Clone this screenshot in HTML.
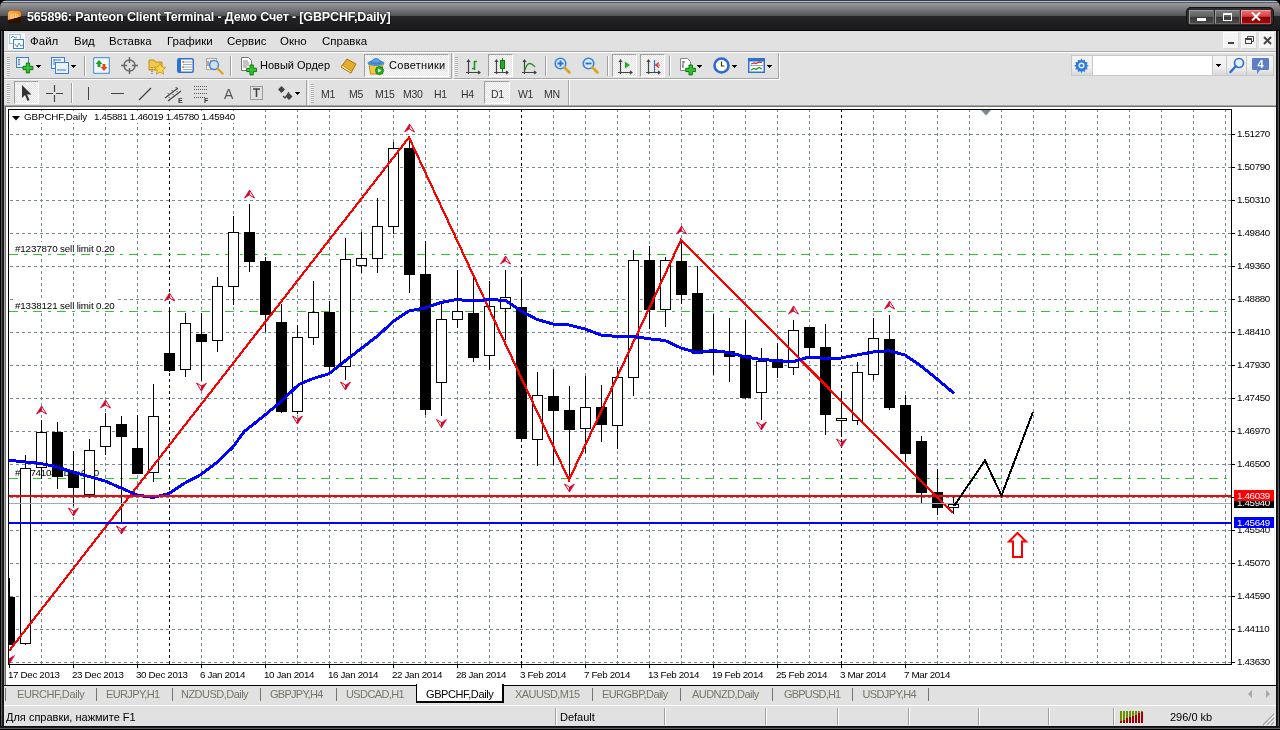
<!DOCTYPE html>
<html lang="ru"><head><meta charset="utf-8"><title>565896: Panteon Client Terminal</title>
<style>
*{box-sizing:border-box;margin:0;padding:0}
html,body{width:1280px;height:730px;overflow:hidden;background:#000}
body{position:relative;font-family:"Liberation Sans","DejaVu Sans",sans-serif;font-size:11px;color:#000}
.abs{position:absolute}
#title{position:absolute;left:0;top:0;width:1280px;height:31px;border-radius:7px 7px 0 0;background:linear-gradient(#3a3a3a 0,#3a3a3a 1px,#a8c0e8 1px,#a8c0e8 2px,#5a5a5a 2px,#5a5a5a 3px,#9a9a9c 3px,#545456 16px,#252527 16px,#1a1a1c 30px,#000 30px)}
#title .t{position:absolute;left:27px;top:10px;font-weight:bold;font-size:12.5px;color:#fff;white-space:nowrap;letter-spacing:-0.14px;text-shadow:0 0 2px #000}
#client{position:absolute;left:4px;top:31px;width:1272px;height:695px;background:#e1e1e1}
#menu{position:absolute;left:0;top:0;width:1272px;height:21px;background:#ececec}
#menu span{position:absolute;top:4px;font-size:11.5px;white-space:nowrap}
.tb{position:absolute;height:26px;border-top:1px solid #fff;border-bottom:1px solid #a8a8a8}
.sep{position:absolute;width:2px;height:20px;border-left:1px solid #a0a0a0;border-right:1px solid #fff}
.grip{position:absolute;width:3px;height:19px;background:repeating-linear-gradient(#b0b0b0 0,#b0b0b0 1px,#f4f4f4 1px,#f4f4f4 2px)}
.pressed{position:absolute;border:1px solid #a0a0a0;border-right-color:#fff;border-bottom-color:#fff;background:repeating-conic-gradient(#fff 0 25%,#e1e1e1 0 50%) 0 0/2px 2px}
.tf{position:absolute;top:88px;font-size:10.5px;letter-spacing:-0.3px;color:#333;white-space:nowrap}
.pl{position:absolute;left:1237px;font-size:9.8px;letter-spacing:-0.35px;line-height:12px;height:12px;white-space:nowrap}
.tk{position:absolute;left:1231px;width:4px;height:1px;background:#000}
.dl{position:absolute;top:669px;font-size:9.8px;letter-spacing:-0.35px;line-height:12px;white-space:nowrap}
.dt{position:absolute;top:664px;width:1px;height:4px;background:#000}
.tab{position:absolute;top:688px;font-size:11px;letter-spacing:-0.4px;color:#76766a;white-space:nowrap}
.tsep{position:absolute;top:688px;width:1px;height:13px;background:#76766a}
.mi{position:absolute;top:35px;font-size:11.5px;margin-left:-1px;white-space:nowrap}
.mdib{position:absolute;top:32px;width:16px;height:17px;background:#f4f4f4;border:1px solid #fafafa;border-right-color:#d8d8d8;border-bottom-color:#d8d8d8}
.mdib i{position:absolute;display:block}
.wb{height:14px;border:1px solid;border-color:#9a9a9a #666 #666 #9a9a9a;background:linear-gradient(#787878 0,#626262 45%,#383838 50%,#484848 100%)}
.ct{position:absolute;font-size:9.8px;letter-spacing:-0.35px;background:#fff;white-space:nowrap;line-height:12px}
#root{position:absolute;left:0;top:0;width:1280px;height:730px;will-change:transform}
</style></head><body><div id="root">
<div id="title"><svg class="abs" style="left:7px;top:9px" width="15" height="16" viewBox="0 0 17 17"><defs><linearGradient id="og" x1="0" y1="0" x2="1" y2="0"><stop offset="0" stop-color="#ffb347"/><stop offset="1" stop-color="#ff7f1a"/></linearGradient></defs><path d="M1 5a4 4 0 014-4h7a4 4 0 014 4v8a3 3 0 01-3 3h-9a3 3 0 01-3-3z" fill="#2a1200"/><path d="M1 5a4 4 0 014-4h7a4 4 0 014 4v3l-15 4z" fill="url(#og)"/><path d="M4 5.500a5 2.500 0 019 0v3l-9 2.400z" fill="#ffe0b0" opacity=".75"/><path d="M6 4v5M8.500 3.500v5M11 4v4" stroke="#ff9c3a" stroke-width="1"/></svg><div class="t">565896: Panteon Client Terminal - Демо Счет - [GBPCHF,Daily]</div></div>
<div id="client"></div>
<div class="abs" style="left:0;top:31px;width:4px;height:699px;background:linear-gradient(90deg,#000 0,#000 1px,#5a5c60 1px,#5a5c60 2px,#1c1d20 2px,#1c1d20 3px,#15161a 3px)"></div>
<div class="abs" style="left:1276px;top:31px;width:4px;height:699px;background:linear-gradient(90deg,#0c0d10 0,#0c0d10 1px,#1c1d20 1px,#1c1d20 2px,#5a5c60 2px,#5a5c60 3px,#000 3px)"></div>
<div class="abs" style="left:0;top:726px;width:1280px;height:4px;background:linear-gradient(#0c0d10 0,#0c0d10 1px,#1c1d20 1px,#1c1d20 2px,#5a5c60 2px,#5a5c60 3px,#000 3px)"></div>

<div class="abs" style="left:4px;top:31px;width:1272px;height:20px;background:#e1e1e1"></div><div class="abs" style="left:4px;top:51px;width:1272px;height:1px;background:#a8a8a8"></div>
<svg class="abs" style="left:8px;top:33px" width="18" height="17" viewBox="0 0 18 17"><rect x="0" y="0" width="17" height="17" fill="#f6f8fc"/><rect x="1.5" y="1.5" width="11" height="9" fill="#fff" stroke="#3b7fd0" stroke-dasharray="1 1"/><rect x="5.5" y="6.5" width="10" height="9" fill="#fff" stroke="#3b7fd0"/><path d="M7 11l2 3 2-4 2 3 2-1" fill="none" stroke="#4a8fe0"/><path d="M3 5l2-2 2 2 2-1" fill="none" stroke="#4a8fe0"/></svg>
<div class="mi" style="left:31px">Файл</div>
<div class="mi" style="left:75px">Вид</div>
<div class="mi" style="left:110px">Вставка</div>
<div class="mi" style="left:168px">Графики</div>
<div class="mi" style="left:228px">Сервис</div>
<div class="mi" style="left:281px">Окно</div>
<div class="mi" style="left:323px">Справка</div>
<div class="mdib" style="left:1223px"><i style="left:4px;top:9px;width:6px;height:2px;background:#444"></i></div>
<div class="mdib" style="left:1241px"><svg class="abs" style="left:2px;top:2px" width="11" height="11" viewBox="0 0 11 11"><path d="M3.5 3.5V1.5H9.5V6.5H7.5" fill="none" stroke="#444"/><path d="M1 3H8V9H1Z M2 5H7V8H2Z" fill="#444" fill-rule="evenodd"/></svg></div>
<div class="mdib" style="left:1259px"><svg class="abs" style="left:3px;top:3px" width="9" height="9" viewBox="0 0 9 9"><path d="M1 1L8 8M8 1L1 8" stroke="#444" stroke-width="2"/></svg></div><div class="abs" style="left:1187px;top:8px;width:86px;height:17px;border-radius:4px;background:#2e2e2e;box-shadow:0 0 0 1px #111"></div>
<div class="abs wb" style="left:1189px;top:10px;width:25px"></div><div class="abs wb" style="left:1215px;top:10px;width:25px"></div><div class="abs wb" style="left:1241px;top:10px;width:30px;background:linear-gradient(#e87070 0,#d64040 45%,#8a0000 50%,#a00808 100%);border-color:#f0a0a0 #c05050 #c05050 #f0a0a0"></div>
<div class="abs" style="left:1197px;top:18px;width:9px;height:3px;background:#fff"></div>
<div class="abs" style="left:1223px;top:13px;width:9px;height:8px;border:1px solid #fff;border-top-width:2px"></div>
<svg class="abs" style="left:1251px;top:12px" width="10" height="9" viewBox="0 0 10 9"><path d="M1 0.500L9 8.500M9 0.500L1 8.500" stroke="#fff" stroke-width="2"/></svg>
<div class="abs" style="left:4px;top:52px;width:1272px;height:1px;background:#fff"></div>
<div class="abs" style="left:4px;top:53px;width:448px;height:26px;border-bottom:1px solid #a6a6a6;border-right:1px solid #a6a6a6"></div>
<div class="abs" style="left:453px;top:53px;width:326px;height:26px;border-bottom:1px solid #a6a6a6;border-right:1px solid #a6a6a6;border-left:1px solid #fff"></div>
<div class="abs" style="left:4px;top:79px;width:775px;height:1px;background:#fff"></div>
<div class="abs" style="left:779px;top:53px;width:1px;height:27px;background:#fff"></div>
<div class="abs" style="left:4px;top:80px;width:303px;height:26px;border-right:1px solid #a6a6a6"></div>
<div class="abs" style="left:308px;top:80px;width:261px;height:26px;border-right:1px solid #a6a6a6;border-left:1px solid #fff"></div>
<div class="abs" style="left:569px;top:80px;width:1px;height:26px;background:#fff"></div>
<div class="abs" style="left:4px;top:105px;width:1272px;height:1px;background:#a6a6a6"></div>
<div class="abs" style="left:4px;top:106px;width:1272px;height:2px;background:#fff"></div>
<div class="grip" style="left:7px;top:57px"></div>
<div class="grip" style="left:455px;top:57px"></div>
<div class="grip" style="left:7px;top:84px"></div>
<div class="grip" style="left:311px;top:84px"></div>
<div class="sep" style="left:84px;top:56px"></div>
<div class="sep" style="left:230px;top:56px"></div>
<div class="sep" style="left:545px;top:56px"></div>
<div class="sep" style="left:607px;top:56px"></div>
<div class="sep" style="left:669px;top:56px"></div>
<div class="sep" style="left:71px;top:83px"></div>
<div class="pressed" style="left:364px;top:54px;width:85px;height:23px"></div>
<div class="pressed" style="left:488px;top:54px;width:25px;height:23px"></div>
<div class="pressed" style="left:612px;top:54px;width:25px;height:23px"></div>
<div class="pressed" style="left:640px;top:54px;width:25px;height:23px"></div>
<div class="pressed" style="left:14px;top:81px;width:25px;height:23px"></div>
<div class="pressed" style="left:484px;top:81px;width:26px;height:23px"></div>
<svg class="abs" style="left:16px;top:57px" width="18" height="18" viewBox="0 0 18 18"><rect x="0.5" y="0.5" width="12" height="10" fill="#eaf2fc" stroke="#3f7fcf"/><path d="M3 2v6M2 3l1-1 1 1M2 7l1 1 1-1" stroke="#3f7fcf" fill="none"/><path d="M10.3 6h3.300v3.300h3.300v3.300h-3.300v3.300h-3.300v-3.300h-3.300v-3.300h3.300z" fill="#35c435" stroke="#0b7a0b" stroke-width="1"/></svg>
<svg class="abs" style="left:36px;top:65px" width="6" height="3" viewBox="0 0 6 3" shape-rendering="crispEdges"><path d="M0 0H5V1H4V2H3V3H2V2H1V1H0Z" fill="#000"/></svg>
<svg class="abs" style="left:51px;top:57px" width="18" height="18" viewBox="0 0 18 18"><rect x="0.5" y="0.5" width="13" height="11" fill="#eaf2fc" stroke="#3f7fcf"/><rect x="4.5" y="5.5" width="13" height="11" fill="#eaf2fc" stroke="#3f7fcf"/><path d="M3 3h7M6 13h9M3 2v6" stroke="#3f7fcf" fill="none"/></svg>
<svg class="abs" style="left:71px;top:65px" width="6" height="3" viewBox="0 0 6 3" shape-rendering="crispEdges"><path d="M0 0H5V1H4V2H3V3H2V2H1V1H0Z" fill="#000"/></svg>
<svg class="abs" style="left:93px;top:57px" width="17" height="17" viewBox="0 0 17 17"><rect x="0.5" y="0.5" width="16" height="16" rx="1.5" fill="#f4f8fe" stroke="#5b9be0" stroke-width="1.4"/><path d="M6 3l3.5 4h-2v3h-3v-3h-2z" fill="#22a022"/><path d="M11 14l-3.500-4h2v-3h3v3h2z" fill="#e04a20"/></svg>
<svg class="abs" style="left:121px;top:57px" width="17" height="17" viewBox="0 0 17 17"><circle cx="8.500" cy="8.500" r="5.500" fill="none" stroke="#666" stroke-width="1.400"/><path d="M8.500 0v6M8.500 11v6M0 8.500h6M11 8.500h6" stroke="#666" stroke-width="1.400"/></svg>
<svg class="abs" style="left:148px;top:57px" width="19" height="18" viewBox="0 0 19 18"><path d="M1 3h5l1.500 2h6.500v8h-13z" fill="#f2c94c" stroke="#b8901c"/><path d="M4 10v7" stroke="#555" stroke-dasharray="1 1"/><path d="M12 6l1.800 3.800 4 .500-3 2.800.8 4-3.600-2-3.600 2 .8-4-3-2.800 4-.500z" fill="#ffd84a" stroke="#c09018" stroke-width=".8"/></svg>
<svg class="abs" style="left:177px;top:58px" width="17" height="15" viewBox="0 0 17 15"><rect x="0.750" y="0.750" width="15.500" height="13.500" rx="1.500" fill="#fff" stroke="#2f6fd0" stroke-width="1.500"/><rect x="1" y="1" width="3" height="13" fill="#2f6fd0"/><path d="M6 4h9M6 6.500h9M6 9h9M6 11.500h9" stroke="#9ab" stroke-width="1"/><path d="M5 4h2M5 9h2" stroke="#d33" stroke-width="1"/></svg>
<svg class="abs" style="left:205px;top:57px" width="19" height="19" viewBox="0 0 19 19"><rect x="1.500" y="1.500" width="10" height="11" fill="#f4efe4" stroke="#b0a890"/><path d="M3 4v5M6 3v7M9 4v4" stroke="#667"/><circle cx="9" cy="8" r="4.500" fill="#cfe4fa" fill-opacity=".85" stroke="#4a8ad8" stroke-width="1.500"/><path d="M12.500 11.500l5 5" stroke="#d9a520" stroke-width="2.400" stroke-linecap="round"/></svg>
<svg class="abs" style="left:240px;top:57px" width="17" height="19" viewBox="0 0 17 19"><path d="M1.500 0.500h7l3 3v10h-10z" fill="#fff" stroke="#777"/><path d="M3 4h5M3 6h6M3 8h6M3 10h4" stroke="#888" stroke-width="1"/><path d="M10 8h3.300v3.300h3.300v3.300h-3.300v3.300h-3.300v-3.300h-3.300v-3.300h3.300z" fill="#35c435" stroke="#0b7a0b" stroke-width="1"/></svg>
<div class="abs" style="left:260px;top:59px;font-size:11px;white-space:nowrap">Новый Ордер</div>
<svg class="abs" style="left:340px;top:58px" width="17" height="16" viewBox="0 0 17 16"><path d="M1 9l6-8 9 5-5 9z" fill="#e6ac2c" stroke="#a87408"/><path d="M1 9l10 6 .5-2-9-5.500z" fill="#fbe9a8" stroke="#a87408" stroke-width=".7"/></svg>
<svg class="abs" style="left:367px;top:57px" width="18" height="19" viewBox="0 0 18 19"><path d="M2 7h14l-1.500 10h-11z" fill="#f5c842" stroke="#c09018"/><ellipse cx="9" cy="6" rx="8.500" ry="3" fill="#4a90d9"/><path d="M4.500 6a4.500 4.500 0 019 0z" fill="#5aa0e6" stroke="#2f6fc0" stroke-width=".8"/><circle cx="12.500" cy="13.500" r="4" fill="#22b022" stroke="#0b7a0b" stroke-width=".8"/><path d="M11.200 11.500v4l3.200-2z" fill="#fff"/></svg>
<div class="abs" style="left:389px;top:59px;font-size:11px;letter-spacing:0.3px;white-space:nowrap">Советники</div>
<svg class="abs" style="left:466px;top:57px" width="15" height="18" viewBox="0 0 15 18"><path d="M2.500 3v14M0 15.500h14M1 5l1.500-2 1.500 2M12 14l2 1.500-2 1.500" fill="none" stroke="#444" stroke-width="1.200"/><path d="M8.500 4v9M8.500 4.500h2.500M6 11.500h2.500" stroke="#1a9a1a" stroke-width="1.600" fill="none"/></svg>
<svg class="abs" style="left:494px;top:57px" width="15" height="18" viewBox="0 0 15 18"><path d="M2.500 3v14M0 15.500h14M1 5l1.500-2 1.500 2M12 14l2 1.500-2 1.500" fill="none" stroke="#444" stroke-width="1.200"/><path d="M8.500 1v14" stroke="#0b7a0b"/><rect x="6.500" y="3.500" width="4" height="8" fill="#22b022" stroke="#0b7a0b"/></svg>
<svg class="abs" style="left:522px;top:57px" width="15" height="18" viewBox="0 0 15 18"><path d="M2.500 3v14M0 15.500h14M1 5l1.500-2 1.500 2M12 14l2 1.500-2 1.500" fill="none" stroke="#444" stroke-width="1.200"/><path d="M3 13c2-7 5-9 10-3" stroke="#1a9a1a" stroke-width="1.400" fill="none"/></svg>
<svg class="abs" style="left:554px;top:57px" width="18" height="18" viewBox="0 0 18 18"><circle cx="6.500" cy="6.500" r="5.300" fill="#d6e8fb" stroke="#3b82d8" stroke-width="1.600"/><path d="M10.500 10.500l5 5" stroke="#d9a520" stroke-width="2.600" stroke-linecap="round"/><path d="M3.500 6.500h6M6.500 3.500v6" stroke="#2a6fd0" stroke-width="1.800"/></svg>
<svg class="abs" style="left:582px;top:57px" width="18" height="18" viewBox="0 0 18 18"><circle cx="6.500" cy="6.500" r="5.300" fill="#d6e8fb" stroke="#3b82d8" stroke-width="1.600"/><path d="M10.500 10.500l5 5" stroke="#d9a520" stroke-width="2.600" stroke-linecap="round"/><path d="M3.500 6.500h6" stroke="#2a6fd0" stroke-width="1.800"/></svg>
<svg class="abs" style="left:618px;top:57px" width="15" height="18" viewBox="0 0 15 18"><path d="M2.500 3v14M0 15.500h14M1 5l1.500-2 1.500 2M12 14l2 1.500-2 1.500" fill="none" stroke="#444" stroke-width="1.200"/><path d="M7 4.500l5 3.500-5 3.500z" fill="#22b022"/></svg>
<svg class="abs" style="left:646px;top:57px" width="15" height="18" viewBox="0 0 15 18"><path d="M2.500 3v14M0 15.500h14M1 5l1.500-2 1.500 2M12 14l2 1.500-2 1.500" fill="none" stroke="#444" stroke-width="1.200"/><path d="M8.500 3v12" stroke="#2a6fd0" stroke-width="1.200"/><path d="M13 5.500l-3.500 2.500 3.500 2.500M9.500 8h4.500" stroke="#d33" stroke-width="1.200" fill="none"/></svg>
<svg class="abs" style="left:679px;top:57px" width="17" height="19" viewBox="0 0 17 19"><path d="M1.500 1.500h7l3 3v9h-10z" fill="#fff" stroke="#888"/><path d="M4 4v7M4 5h2M4 9h-1" stroke="#555"/><path d="M10 8h3.300v3.300h3.300v3.300h-3.300v3.300h-3.300v-3.300h-3.300v-3.300h3.300z" fill="#35c435" stroke="#0b7a0b" stroke-width="1"/></svg>
<svg class="abs" style="left:697px;top:65px" width="6" height="3" viewBox="0 0 6 3" shape-rendering="crispEdges"><path d="M0 0H5V1H4V2H3V3H2V2H1V1H0Z" fill="#000"/></svg>
<svg class="abs" style="left:713px;top:57px" width="17" height="17" viewBox="0 0 17 17"><circle cx="8.500" cy="8.500" r="7" fill="#fff" stroke="#2a6ad4" stroke-width="2.600"/><path d="M8.500 4.500v4.500h3" stroke="#333" stroke-width="1.200" fill="none"/></svg>
<svg class="abs" style="left:732px;top:65px" width="6" height="3" viewBox="0 0 6 3" shape-rendering="crispEdges"><path d="M0 0H5V1H4V2H3V3H2V2H1V1H0Z" fill="#000"/></svg>
<svg class="abs" style="left:748px;top:58px" width="17" height="15" viewBox="0 0 17 15"><rect x=".75" y=".75" width="15.500" height="13.500" fill="#fff" stroke="#2f6fd0" stroke-width="1.500"/><rect x="1" y="1" width="15" height="2.500" fill="#2f6fd0"/><path d="M2 7.500h13" stroke="#9ab"/><path d="M3 6l3-1 2 .500 3-1.500 3 .500" stroke="#c33" stroke-width="1.300" fill="none"/><path d="M3 12l3-1.500 2 1 3-2 3 1.500" stroke="#1a9a1a" stroke-width="1.300" fill="none"/></svg>
<svg class="abs" style="left:767px;top:65px" width="6" height="3" viewBox="0 0 6 3" shape-rendering="crispEdges"><path d="M0 0H5V1H4V2H3V3H2V2H1V1H0Z" fill="#000"/></svg>
<div class="abs" style="left:1071px;top:55px;width:203px;height:21px;border:1px solid #c8c8c8;background:linear-gradient(#f4f4f4,#f0f0f0 60%,#d8d8d8)"></div>
<div class="abs" style="left:1092px;top:56px;width:121px;height:19px;background:#fff;border-left:1px solid #c8c8c8;border-right:1px solid #c8c8c8"></div>
<div class="abs" style="left:1226px;top:56px;width:1px;height:19px;background:#c8c8c8"></div><div class="abs" style="left:1246px;top:56px;width:1px;height:19px;background:#c8c8c8"></div>
<svg class="abs" style="left:1074px;top:58px" width="15" height="15" viewBox="0 0 15 15"><path d="M7.500 0l1.300 2.200 2.400-.9.300 2.600 2.600.3-.9 2.400 2.200 1.300-2.200 1.300.9 2.400-2.600.3-.3 2.600-2.400-.9-1.300 2.200-1.300-2.200-2.400.9-.3-2.600-2.600-.3.9-2.400-2.200-1.300 2.200-1.300-.9-2.400 2.600-.3.300-2.600 2.400.9z" transform="scale(.93) translate(.5 .5)" fill="#2f7ae0"/><circle cx="7.500" cy="7.500" r="3" fill="#eaf2fc"/><circle cx="7.500" cy="7.500" r="1.600" fill="#2f7ae0"/></svg>
<svg class="abs" style="left:1216px;top:64px" width="6" height="3" viewBox="0 0 6 3" shape-rendering="crispEdges"><path d="M0 0H5V1H4V2H3V3H2V2H1V1H0Z" fill="#000"/></svg>
<svg class="abs" style="left:1229px;top:57px" width="16" height="17" viewBox="0 0 16 17"><circle cx="10" cy="6" r="4.500" fill="#eaf4ff" stroke="#2f6fd0" stroke-width="1.700"/><path d="M6.500 9.500l-5 5.500" stroke="#2f6fd0" stroke-width="2.400" stroke-linecap="round"/></svg>
<svg class="abs" style="left:1252px;top:58px" width="17" height="17" viewBox="0 0 17 17"><path d="M1 0h15a1 1 0 011 1v10a1 1 0 01-1 1h-8l-3 4v-4h-4a1 1 0 01-1-1v-10a1 1 0 011-1z" fill="#5b7fc4"/><text x="8.500" y="10" font-size="11" font-weight="bold" fill="#fff" text-anchor="middle" font-family="Liberation Sans,sans-serif">4</text></svg>
<svg class="abs" style="left:21px;top:85px" width="11" height="17" viewBox="0 0 11 17"><path d="M1 0v13l3-3 2.500 6 2-1-2.500-5.500h4.500z" fill="#333"/></svg>
<svg class="abs" style="left:46px;top:85px" width="17" height="17" viewBox="0 0 17 17"><path d="M8.500 0v7M8.500 10v7M0 8.500h7M10 8.500h7" stroke="#444" stroke-width="1.200"/></svg>
<div class="abs" style="left:88px;top:87px;width:1px;height:13px;background:#444"></div>
<div class="abs" style="left:111px;top:93px;width:13px;height:1px;background:#444"></div>
<svg class="abs" style="left:138px;top:87px" width="15" height="14" viewBox="0 0 15 14"><path d="M1 13L13 1" stroke="#444" stroke-width="1.200"/></svg>
<svg class="abs" style="left:164px;top:84px" width="20" height="20" viewBox="0 0 20 20"><path d="M1 14L14 4M4 17L17 7" stroke="#444" stroke-width="1.100"/><path d="M4 9l2 8M8 6l2 8M12 3l2 8" stroke="#444" stroke-width="1" stroke-dasharray="1 1"/><text x="14" y="19" font-size="7" font-weight="bold" fill="#333" font-family="Liberation Sans,sans-serif">E</text></svg>
<svg class="abs" style="left:193px;top:85px" width="20" height="19" viewBox="0 0 20 19"><path d="M1 1.500h13M1 4.500h13M1 8.500h13M1 12.500h11" stroke="#555" stroke-dasharray="1 1"/><text x="11" y="18" font-size="7" font-weight="bold" fill="#333" font-family="Liberation Sans,sans-serif">F</text></svg>
<div class="abs" style="left:224px;top:86px;font-size:14px;color:#555">A</div>
<svg class="abs" style="left:250px;top:85px" width="14" height="16" viewBox="0 0 14 16"><rect x=".5" y="1.500" width="12" height="13" fill="none" stroke="#555" stroke-dasharray="1 1"/><path d="M3 4h7M6.500 4v8" stroke="#444" stroke-width="1.600"/></svg>
<svg class="abs" style="left:278px;top:86px" width="15" height="14" viewBox="0 0 15 14"><path d="M3.500 0l3.500 3.500-3.500 3.500-3.500-3.500z" fill="#444"/><path d="M11 7l3.500 3.500-3.500 3.500-3.500-3.500z" fill="#444"/><path d="M5 10l2 2 4-6" stroke="#444" fill="none" stroke-width="1.200"/></svg>
<svg class="abs" style="left:295px;top:92px" width="6" height="3" viewBox="0 0 6 3" shape-rendering="crispEdges"><path d="M0 0H5V1H4V2H3V3H2V2H1V1H0Z" fill="#000"/></svg>
<div class="tf" style="left:321px">M1</div>
<div class="tf" style="left:349px">M5</div>
<div class="tf" style="left:375px">M15</div>
<div class="tf" style="left:403px">M30</div>
<div class="tf" style="left:434px">H1</div>
<div class="tf" style="left:461px">H4</div>
<div class="tf" style="left:491px">D1</div>
<div class="tf" style="left:518px">W1</div>
<div class="tf" style="left:544px">MN</div>
<svg id="ch" width="1280" height="730" viewBox="0 0 1280 730" style="position:absolute;left:0;top:0" shape-rendering="crispEdges">
<rect x="4" y="105" width="1272" height="580" fill="#a8a8a8"/><rect x="5" y="106" width="1271" height="579" fill="#716f64"/><rect x="6" y="107" width="1270" height="578" fill="#fff"/><rect x="1274" y="107" width="1" height="578" fill="#f0f0f0"/>
<rect x="8" y="109" width="1224" height="1" fill="#000"/><rect x="8" y="109" width="1" height="556" fill="#000"/><rect x="1231" y="109" width="1" height="556" fill="#000"/><rect x="8" y="664" width="1224" height="1" fill="#000"/>
<path d="M10 134.5H1231M10 167.5H1231M10 200.5H1231M10 233.5H1231M10 266.5H1231M10 299.5H1231M10 332.5H1231M10 365.5H1231M10 398.5H1231M10 431.5H1231M10 464.5H1231M10 497.5H1231M10 530.5H1231M10 563.5H1231M10 596.5H1231M10 629.5H1231M10 662.5H1231" stroke="#778899" stroke-width="1" stroke-dasharray="3 3" fill="none"/>
<path d="M41.5 110V664M73.5 110V664M105.5 110V664M137.5 110V664M201.5 110V664M233.5 110V664M265.5 110V664M297.5 110V664M329.5 110V664M361.5 110V664M393.5 110V664M425.5 110V664M457.5 110V664M489.5 110V664M553.5 110V664M585.5 110V664M617.5 110V664M649.5 110V664M681.5 110V664M713.5 110V664M745.5 110V664M777.5 110V664M809.5 110V664M873.5 110V664M905.5 110V664M937.5 110V664M969.5 110V664M1001.5 110V664M1033.5 110V664M1065.5 110V664M1097.5 110V664M1129.5 110V664M1161.5 110V664M1193.5 110V664M1225.5 110V664" stroke="#778899" stroke-width="1" stroke-dasharray="3 3" stroke-dashoffset="1" fill="none"/>
<path d="M169.5 110V664M521.5 110V664M841.5 110V664" stroke="#000" stroke-width="1" stroke-dasharray="3 3" stroke-dashoffset="1" fill="none"/>
<path d="M9 254.5H1231M9 311.5H1231M9 478.5H1231" stroke="#2cc82c" stroke-width="1" stroke-dasharray="9 6 3 6" fill="none"/>
<rect x="14" y="242" width="101" height="12" fill="#fff"/><text x="15" y="252" font-size="9.8" letter-spacing="-0.14" font-family="Liberation Sans,sans-serif" fill="#000">#1237870 sell limit 0.20</text>
<rect x="14" y="299" width="101" height="12" fill="#fff"/><text x="15" y="309" font-size="9.8" letter-spacing="-0.14" font-family="Liberation Sans,sans-serif" fill="#000">#1338121 sell limit 0.20</text>
<rect x="14" y="466" width="84" height="12" fill="#fff"/><text x="15" y="476" font-size="9.8" letter-spacing="-0.3" font-family="Liberation Sans,sans-serif" fill="#000">#13741036 buy 0.20</text>
<rect x="9" y="597" width="6" height="48" fill="#000"/><rect x="9" y="578" width="1" height="20" fill="#000"/>
<path d="M25.5 455V645M41.5 420V479M57.5 422V489M73.5 451V506M89.5 439V498M105.5 413V455M121.5 416V524M137.5 415V474M153.5 384V482M169.5 307V372M185.5 313V377M201.5 313V381M217.5 277V352M233.5 216V305M249.5 204V272M265.5 257V332M281.5 304V413M297.5 325V414M313.5 281V345M329.5 301V373M345.5 238V380M361.5 232V273M377.5 198V273M393.5 142V234M409.5 138V293M425.5 241V415M441.5 304V416M457.5 270V328M473.5 276V362M489.5 281V370M505.5 270V340M521.5 277V441M537.5 372V466M553.5 369V465M569.5 386V480M585.5 376V453M601.5 385V442M617.5 367V449M633.5 250V396M649.5 246V329M665.5 257V327M681.5 240V304M697.5 266V354M713.5 314V375M729.5 318V382M745.5 320V399M761.5 348V420M777.5 343V378M793.5 320V375M809.5 327V357M825.5 324V435M841.5 391V437M857.5 362V425M873.5 318V380M889.5 315V410M905.5 395V462M921.5 436V504M937.5 469V515M953.5 497V514" stroke="#000" stroke-width="1" fill="none"/>
<rect x="20.5" y="468.5" width="10" height="175" fill="#fff" stroke="#000" stroke-width="1"/><rect x="36.5" y="432.5" width="10" height="35" fill="#fff" stroke="#000" stroke-width="1"/><rect x="52" y="432" width="11" height="45" fill="#000"/><rect x="68" y="472" width="11" height="16" fill="#000"/><rect x="84.5" y="450.5" width="10" height="44" fill="#fff" stroke="#000" stroke-width="1"/><rect x="100.5" y="426.5" width="10" height="20" fill="#fff" stroke="#000" stroke-width="1"/><rect x="116" y="424" width="11" height="13" fill="#000"/><rect x="132" y="448" width="11" height="26" fill="#000"/><rect x="148.5" y="416.5" width="10" height="56" fill="#fff" stroke="#000" stroke-width="1"/><rect x="164" y="353" width="11" height="18" fill="#000"/><rect x="180.5" y="323.5" width="10" height="46" fill="#fff" stroke="#000" stroke-width="1"/><rect x="196" y="334" width="11" height="8" fill="#000"/><rect x="212.5" y="286.5" width="10" height="54" fill="#fff" stroke="#000" stroke-width="1"/><rect x="228.5" y="232.5" width="10" height="54" fill="#fff" stroke="#000" stroke-width="1"/><rect x="244" y="232" width="11" height="30" fill="#000"/><rect x="260" y="261" width="11" height="54" fill="#000"/><rect x="276" y="322" width="11" height="90" fill="#000"/><rect x="292.5" y="337.5" width="10" height="74" fill="#fff" stroke="#000" stroke-width="1"/><rect x="308.5" y="312.5" width="10" height="25" fill="#fff" stroke="#000" stroke-width="1"/><rect x="324" y="312" width="11" height="55" fill="#000"/><rect x="340.5" y="259.5" width="10" height="107" fill="#fff" stroke="#000" stroke-width="1"/><rect x="356.5" y="258.5" width="10" height="7" fill="#fff" stroke="#000" stroke-width="1"/><rect x="372.5" y="226.5" width="10" height="32" fill="#fff" stroke="#000" stroke-width="1"/><rect x="388.5" y="148.5" width="10" height="78" fill="#fff" stroke="#000" stroke-width="1"/><rect x="404" y="148" width="11" height="127" fill="#000"/><rect x="420" y="274" width="11" height="136" fill="#000"/><rect x="436.5" y="319.5" width="10" height="63" fill="#fff" stroke="#000" stroke-width="1"/><rect x="452.5" y="311.5" width="10" height="8" fill="#fff" stroke="#000" stroke-width="1"/><rect x="468" y="313" width="11" height="45" fill="#000"/><rect x="484.5" y="306.5" width="10" height="49" fill="#fff" stroke="#000" stroke-width="1"/><rect x="500.5" y="297.5" width="10" height="11" fill="#fff" stroke="#000" stroke-width="1"/><rect x="516" y="307" width="11" height="132" fill="#000"/><rect x="532.5" y="395.5" width="10" height="44" fill="#fff" stroke="#000" stroke-width="1"/><rect x="548" y="396" width="11" height="15" fill="#000"/><rect x="564" y="410" width="11" height="20" fill="#000"/><rect x="580.5" y="407.5" width="10" height="21" fill="#fff" stroke="#000" stroke-width="1"/><rect x="596" y="407" width="11" height="18" fill="#000"/><rect x="612.5" y="377.5" width="10" height="48" fill="#fff" stroke="#000" stroke-width="1"/><rect x="628.5" y="260.5" width="10" height="117" fill="#fff" stroke="#000" stroke-width="1"/><rect x="644" y="260" width="11" height="50" fill="#000"/><rect x="660.5" y="260.5" width="10" height="49" fill="#fff" stroke="#000" stroke-width="1"/><rect x="676" y="261" width="11" height="34" fill="#000"/><rect x="692" y="293" width="11" height="61" fill="#000"/><rect x="708" y="351" width="11" height="2" fill="#000"/><rect x="724" y="351" width="11" height="6" fill="#000"/><rect x="740" y="355" width="11" height="43" fill="#000"/><rect x="756.5" y="361.5" width="10" height="31" fill="#fff" stroke="#000" stroke-width="1"/><rect x="772" y="359" width="11" height="9" fill="#000"/><rect x="788.5" y="330.5" width="10" height="37" fill="#fff" stroke="#000" stroke-width="1"/><rect x="804" y="327" width="11" height="21" fill="#000"/><rect x="820" y="347" width="11" height="68" fill="#000"/><rect x="836.5" y="418.5" width="10" height="2" fill="#fff" stroke="#000" stroke-width="1"/><rect x="852.5" y="372.5" width="10" height="48" fill="#fff" stroke="#000" stroke-width="1"/><rect x="868.5" y="338.5" width="10" height="36" fill="#fff" stroke="#000" stroke-width="1"/><rect x="884" y="339" width="11" height="69" fill="#000"/><rect x="900" y="405" width="11" height="49" fill="#000"/><rect x="916" y="441" width="11" height="52" fill="#000"/><rect x="932" y="492" width="11" height="16" fill="#000"/><rect x="948.5" y="504.5" width="10" height="3" fill="#fff" stroke="#000" stroke-width="1"/>
</svg>
<svg width="1280" height="730" viewBox="0 0 1280 730" style="position:absolute;left:0;top:0">
<defs><clipPath id="cp"><rect x="9" y="110" width="1222" height="554"/></clipPath></defs><g clip-path="url(#cp)">
<polyline points="9,651 409,137.5 569,480 681,240 953,513" fill="none" stroke="#f00" stroke-width="2.2" stroke-linejoin="miter" shape-rendering="crispEdges"/>
<polyline points="9,460.3 25,462 41,463.5 57,467 73,472 89,476.5 105,481 121,488 137,495 153,497.5 169,493.5 185,483 201,474.5 217,462.5 233,447 243.75,432 265,415 280,402.5 298.75,384.5 312.5,378.75 329,373.75 345,361 362.5,347.5 377.5,336 393.75,321 409,311 425,308 441,302.5 457,299.5 472.5,301 490,299.5 505.5,300.5 521,311 537,319.5 553,324 569,325 585,329 601,335 617,336.5 633,336.5 649,338.75 665,340.5 681,348 697,352.5 713,350.5 729,352.5 745,356.75 761,359.5 777,360.5 793,362 800,359.5 809,357 825,358.5 841,358 857,355 873,352 889,350.75 905,355 921,366 937,379 953,392.5" fill="none" stroke="#00f" stroke-width="3" stroke-linejoin="round" stroke-linecap="round" shape-rendering="crispEdges"/>
<g shape-rendering="crispEdges"><rect x="9" y="503" width="1222" height="1" fill="#a0a8b4"/><rect x="9" y="495" width="1222" height="2" fill="#f00"/><rect x="9" y="522" width="1222" height="2" fill="#00f"/></g>
<polyline points="954,506 985,460.5 1001.5,495.5 1033,412" fill="none" stroke="#000" stroke-width="2" stroke-linejoin="miter" shape-rendering="crispEdges"/>
<path d="M1017.5 533L1026 541.5H1022V557H1013V541.5H1009Z" fill="#fff" stroke="#f00" stroke-width="2" stroke-linejoin="miter"/>
<path d="M41.5 406L36.5 414L41.5 411Z" fill="#dc0028" stroke="#dc0028" stroke-width=".7"/><path d="M41.5 406L46.5 414L41.5 411" fill="none" stroke="#dc0028" stroke-width="1"/>
<path d="M105.5 400L100.5 408L105.5 405Z" fill="#dc0028" stroke="#dc0028" stroke-width=".7"/><path d="M105.5 400L110.5 408L105.5 405" fill="none" stroke="#dc0028" stroke-width="1"/>
<path d="M169.5 293L164.5 301L169.5 298Z" fill="#dc0028" stroke="#dc0028" stroke-width=".7"/><path d="M169.5 293L174.5 301L169.5 298" fill="none" stroke="#dc0028" stroke-width="1"/>
<path d="M249.5 190L244.5 198L249.5 195Z" fill="#dc0028" stroke="#dc0028" stroke-width=".7"/><path d="M249.5 190L254.5 198L249.5 195" fill="none" stroke="#dc0028" stroke-width="1"/>
<path d="M409.5 124L404.5 132L409.5 129Z" fill="#dc0028" stroke="#dc0028" stroke-width=".7"/><path d="M409.5 124L414.5 132L409.5 129" fill="none" stroke="#dc0028" stroke-width="1"/>
<path d="M505.5 256L500.5 264L505.5 261Z" fill="#dc0028" stroke="#dc0028" stroke-width=".7"/><path d="M505.5 256L510.5 264L505.5 261" fill="none" stroke="#dc0028" stroke-width="1"/>
<path d="M681.5 226L676.5 234L681.5 231Z" fill="#dc0028" stroke="#dc0028" stroke-width=".7"/><path d="M681.5 226L686.5 234L681.5 231" fill="none" stroke="#dc0028" stroke-width="1"/>
<path d="M793.5 306L788.5 314L793.5 311Z" fill="#dc0028" stroke="#dc0028" stroke-width=".7"/><path d="M793.5 306L798.5 314L793.5 311" fill="none" stroke="#dc0028" stroke-width="1"/>
<path d="M889.5 301L884.5 309L889.5 306Z" fill="#dc0028" stroke="#dc0028" stroke-width=".7"/><path d="M889.5 301L894.5 309L889.5 306" fill="none" stroke="#dc0028" stroke-width="1"/>
<path d="M9.5 663.5L4.5 655.5L9.5 658.5Z" fill="none" stroke="#dc0028" stroke-width="1"/><path d="M9.5 663.5L14.5 655.5L9.5 658.5Z" fill="#dc0028" stroke="#dc0028" stroke-width=".7"/>
<path d="M73.5 516L68.5 508L73.5 511Z" fill="none" stroke="#dc0028" stroke-width="1"/><path d="M73.5 516L78.5 508L73.5 511Z" fill="#dc0028" stroke="#dc0028" stroke-width=".7"/>
<path d="M121.5 534L116.5 526L121.5 529Z" fill="none" stroke="#dc0028" stroke-width="1"/><path d="M121.5 534L126.5 526L121.5 529Z" fill="#dc0028" stroke="#dc0028" stroke-width=".7"/>
<path d="M201.5 391L196.5 383L201.5 386Z" fill="none" stroke="#dc0028" stroke-width="1"/><path d="M201.5 391L206.5 383L201.5 386Z" fill="#dc0028" stroke="#dc0028" stroke-width=".7"/>
<path d="M297.5 424L292.5 416L297.5 419Z" fill="none" stroke="#dc0028" stroke-width="1"/><path d="M297.5 424L302.5 416L297.5 419Z" fill="#dc0028" stroke="#dc0028" stroke-width=".7"/>
<path d="M345.5 390L340.5 382L345.5 385Z" fill="none" stroke="#dc0028" stroke-width="1"/><path d="M345.5 390L350.5 382L345.5 385Z" fill="#dc0028" stroke="#dc0028" stroke-width=".7"/>
<path d="M441.5 427.5L436.5 419.5L441.5 422.5Z" fill="none" stroke="#dc0028" stroke-width="1"/><path d="M441.5 427.5L446.5 419.5L441.5 422.5Z" fill="#dc0028" stroke="#dc0028" stroke-width=".7"/>
<path d="M569.5 492L564.5 484L569.5 487Z" fill="none" stroke="#dc0028" stroke-width="1"/><path d="M569.5 492L574.5 484L569.5 487Z" fill="#dc0028" stroke="#dc0028" stroke-width=".7"/>
<path d="M761.5 430L756.5 422L761.5 425Z" fill="none" stroke="#dc0028" stroke-width="1"/><path d="M761.5 430L766.5 422L761.5 425Z" fill="#dc0028" stroke="#dc0028" stroke-width=".7"/>
<path d="M841.5 447L836.5 439L841.5 442Z" fill="none" stroke="#dc0028" stroke-width="1"/><path d="M841.5 447L846.5 439L841.5 442Z" fill="#dc0028" stroke="#dc0028" stroke-width=".7"/>
</g>
<path d="M981 110H991L986 115.5Z" fill="#778899"/>
</svg>
<div class="pl" style="top:128px">1.51270</div><div class="tk" style="top:134px"></div>
<div class="pl" style="top:161px">1.50790</div><div class="tk" style="top:167px"></div>
<div class="pl" style="top:194px">1.50310</div><div class="tk" style="top:200px"></div>
<div class="pl" style="top:227px">1.49840</div><div class="tk" style="top:233px"></div>
<div class="pl" style="top:260px">1.49360</div><div class="tk" style="top:266px"></div>
<div class="pl" style="top:293px">1.48880</div><div class="tk" style="top:299px"></div>
<div class="pl" style="top:326px">1.48410</div><div class="tk" style="top:332px"></div>
<div class="pl" style="top:359px">1.47930</div><div class="tk" style="top:365px"></div>
<div class="pl" style="top:392px">1.47450</div><div class="tk" style="top:398px"></div>
<div class="pl" style="top:425px">1.46970</div><div class="tk" style="top:431px"></div>
<div class="pl" style="top:458px">1.46500</div><div class="tk" style="top:464px"></div>
<div class="pl" style="top:491px">1.46020</div><div class="tk" style="top:497px"></div>
<div class="pl" style="top:524px">1.45540</div><div class="tk" style="top:530px"></div>
<div class="pl" style="top:557px">1.45070</div><div class="tk" style="top:563px"></div>
<div class="pl" style="top:590px">1.44590</div><div class="tk" style="top:596px"></div>
<div class="pl" style="top:623px">1.44110</div><div class="tk" style="top:629px"></div>
<div class="pl" style="top:656px">1.43630</div><div class="tk" style="top:662px"></div>
<div class="abs" style="left:1234px;top:497px;width:40px;height:11px;background:#000"></div><div class="pl" style="top:497px;color:#fff">1.45940</div>
<div class="abs" style="left:1234px;top:490px;width:40px;height:11px;background:#f00"></div><div class="pl" style="top:490px;color:#fff">1.46039</div>
<div class="abs" style="left:1234px;top:517px;width:40px;height:11px;background:#00f"></div><div class="pl" style="top:517px;color:#fff">1.45649</div>
<svg class="abs" style="left:12px;top:116px" width="8" height="5" viewBox="0 0 8 5"><path d="M0 0H8L4 4.500Z" fill="#000"/></svg>
<div class="ct" style="left:22px;top:111px;width:214px;height:12px"></div><div class="ct" style="left:24px;top:111px;letter-spacing:-0.1px">GBPCHF,Daily</div><div class="ct" style="left:94px;top:111px;letter-spacing:-0.29px">1.45881 1.46019 1.45780 1.45940</div>
<div class="dl" style="left:8px">17 Dec 2013</div><div class="dt" style="left:9px"></div>
<div class="dl" style="left:72px">23 Dec 2013</div><div class="dt" style="left:73px"></div>
<div class="dl" style="left:136px">30 Dec 2013</div><div class="dt" style="left:137px"></div>
<div class="dl" style="left:200px">6 Jan 2014</div><div class="dt" style="left:201px"></div>
<div class="dl" style="left:264px">10 Jan 2014</div><div class="dt" style="left:265px"></div>
<div class="dl" style="left:328px">16 Jan 2014</div><div class="dt" style="left:329px"></div>
<div class="dl" style="left:392px">22 Jan 2014</div><div class="dt" style="left:393px"></div>
<div class="dl" style="left:456px">28 Jan 2014</div><div class="dt" style="left:457px"></div>
<div class="dl" style="left:520px">3 Feb 2014</div><div class="dt" style="left:521px"></div>
<div class="dl" style="left:584px">7 Feb 2014</div><div class="dt" style="left:585px"></div>
<div class="dl" style="left:648px">13 Feb 2014</div><div class="dt" style="left:649px"></div>
<div class="dl" style="left:712px">19 Feb 2014</div><div class="dt" style="left:713px"></div>
<div class="dl" style="left:776px">25 Feb 2014</div><div class="dt" style="left:777px"></div>
<div class="dl" style="left:840px">3 Mar 2014</div><div class="dt" style="left:841px"></div>
<div class="dl" style="left:904px">7 Mar 2014</div><div class="dt" style="left:905px"></div>
<div class="abs" style="left:4px;top:685px;width:1272px;height:1px;background:#000"></div>
<div class="abs" style="left:4px;top:686px;width:1272px;height:19px;background:#e1e1e1"></div>
<div class="tab" style="left:17px;letter-spacing:-0.4px">EURCHF,Daily</div>
<div class="tab" style="left:106px;letter-spacing:-0.63px">EURJPY,H1</div>
<div class="tab" style="left:181px;letter-spacing:-0.52px">NZDUSD,Daily</div>
<div class="tab" style="left:270px;letter-spacing:-0.73px">GBPJPY,H4</div>
<div class="tab" style="left:346px;letter-spacing:-0.61px">USDCAD,H1</div>
<div class="tab" style="left:515px;letter-spacing:-0.58px">XAUUSD,M15</div>
<div class="tab" style="left:602px;letter-spacing:-0.58px">EURGBP,Daily</div>
<div class="tab" style="left:692px;letter-spacing:-0.55px">AUDNZD,Daily</div>
<div class="tab" style="left:784px;letter-spacing:-0.8px">GBPUSD,H1</div>
<div class="tab" style="left:862.5px;letter-spacing:-0.62px">USDJPY,H4</div>
<div class="tsep" style="left:5px"></div>
<div class="tsep" style="left:96px"></div>
<div class="tsep" style="left:172px"></div>
<div class="tsep" style="left:260px"></div>
<div class="tsep" style="left:336px"></div>
<div class="tsep" style="left:592px"></div>
<div class="tsep" style="left:680px"></div>
<div class="tsep" style="left:772px"></div>
<div class="tsep" style="left:852px"></div>
<div class="tsep" style="left:928px"></div>
<div class="abs" style="left:416px;top:684px;width:88px;height:19px;background:#fff;border:1px solid #000;border-top:none;border-right:2px solid #000;border-bottom:2px solid #000"></div>
<div class="abs" style="left:426px;top:688px;font-size:11px;letter-spacing:-0.4px;white-space:nowrap">GBPCHF,Daily</div>
<svg class="abs" style="left:1248px;top:690px" width="22" height="9" viewBox="0 0 22 9"><path d="M4 0v8l-4-4zM18 0v8l4-4z" fill="#a8a8a8"/></svg>
<div class="abs" style="left:4px;top:705px;width:1272px;height:1px;background:#fff"></div>
<div class="abs" style="left:4px;top:706px;width:1272px;height:20px;background:#e1e1e1"></div>
<div class="abs" style="left:6px;top:711px;font-size:11px;white-space:nowrap">Для справки, нажмите F1</div>
<div class="abs" style="left:560px;top:711px;font-size:11px;white-space:nowrap">Default</div>
<div class="abs" style="left:555px;top:708px;width:2px;height:17px;border-left:1px solid #a0a0a0;border-right:1px solid #fff"></div>
<div class="abs" style="left:664px;top:708px;width:2px;height:17px;border-left:1px solid #a0a0a0;border-right:1px solid #fff"></div>
<div class="abs" style="left:765px;top:708px;width:2px;height:17px;border-left:1px solid #a0a0a0;border-right:1px solid #fff"></div>
<div class="abs" style="left:837px;top:708px;width:2px;height:17px;border-left:1px solid #a0a0a0;border-right:1px solid #fff"></div>
<div class="abs" style="left:908px;top:708px;width:2px;height:17px;border-left:1px solid #a0a0a0;border-right:1px solid #fff"></div>
<div class="abs" style="left:978px;top:708px;width:2px;height:17px;border-left:1px solid #a0a0a0;border-right:1px solid #fff"></div>
<div class="abs" style="left:1048px;top:708px;width:2px;height:17px;border-left:1px solid #a0a0a0;border-right:1px solid #fff"></div>
<div class="abs" style="left:1113px;top:708px;width:2px;height:17px;border-left:1px solid #a0a0a0;border-right:1px solid #fff"></div>
<div class="abs" style="left:1170px;top:711px;font-size:11px;white-space:nowrap">296/0 kb</div>
<svg class="abs" style="left:1120px;top:711px" width="24" height="12" viewBox="0 0 24 12" shape-rendering="crispEdges"><rect x="0" y="0" width="2" height="10" fill="#6b8e00"/><rect x="0" y="10" width="2" height="2" fill="#a00000"/><rect x="3" y="0" width="2" height="9" fill="#6b8e00"/><rect x="3" y="9" width="2" height="3" fill="#a00000"/><rect x="6" y="0" width="2" height="7" fill="#6b8e00"/><rect x="6" y="7" width="2" height="5" fill="#a00000"/><rect x="9" y="0" width="2" height="6" fill="#6b8e00"/><rect x="9" y="6" width="2" height="6" fill="#a00000"/><rect x="12" y="0" width="2" height="5" fill="#6b8e00"/><rect x="12" y="5" width="2" height="7" fill="#a00000"/><rect x="15" y="0" width="2" height="4" fill="#6b8e00"/><rect x="15" y="4" width="2" height="8" fill="#a00000"/><rect x="18" y="0" width="2" height="2" fill="#6b8e00"/><rect x="18" y="2" width="2" height="10" fill="#a00000"/><rect x="21" y="0" width="2" height="1" fill="#6b8e00"/><rect x="21" y="1" width="2" height="11" fill="#a00000"/></svg>
<svg class="abs" style="left:1262px;top:713px" width="13" height="13" viewBox="0 0 13 13"><path d="M12 1L1 12M12 5L5 12M12 9L9 12" stroke="#a0a0a0" stroke-width="1.200"/><path d="M13 2L2 13M13 6L6 13M13 10L10 13" stroke="#fff" stroke-width="1"/></svg>
</div></body></html>
